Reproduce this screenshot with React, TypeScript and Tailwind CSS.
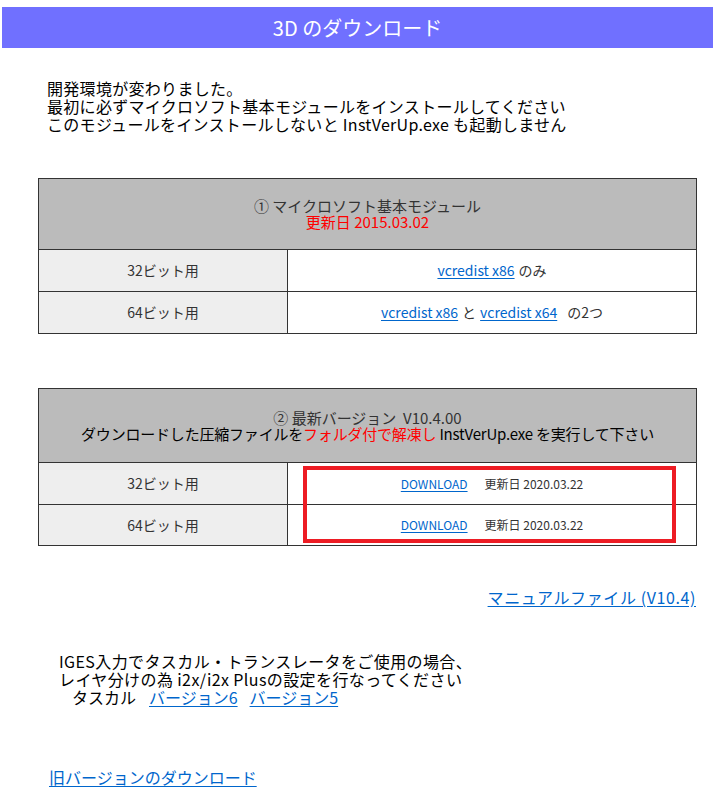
import React from "react";

const font = { fontFamily: '"Noto Sans CJK JP", "Noto Sans", sans-serif' };

function A({ children, className = "" }: { children: React.ReactNode; className?: string }) {
  return <a href="#" className={"text-[#0066cc] underline underline-offset-2 " + className}>{children}</a>;
}

export default function App() {
  return (
    <div className="w-[727px] h-[800px] bg-white text-black overflow-hidden" style={font}>
      <div className="ml-[2px] mt-[7px] w-[711px] h-[41px] bg-[#7070ff] flex items-center justify-center text-white text-[20px]">
        3D のダウンロード
      </div>

      <div className="ml-[47px] mt-[31px] text-[16px] leading-[18px] tracking-[0.3px]">
        <div>開発環境が変わりました。</div>
        <div>最初に必ずマイクロソフト基本モジュールをインストールしてください</div>
        <div>このモジュールをインストールしないと InstVerUp.exe も起動しません</div>
      </div>

      <div className="ml-[38px] mt-[45px] w-[659px] border border-[#333] text-[#333]">
        <div className="h-[71px] bg-[#bbbbbb] border-b border-[#333] flex flex-col items-center justify-center text-[15px] leading-[16px]">
          <div>① マイクロソフト基本モジュール</div>
          <div className="text-[#ff0000]">更新日 2015.03.02</div>
        </div>
        <div className="grid grid-cols-[249px_1fr] h-[42px] border-b border-[#333] text-[14px]">
          <div className="bg-[#eeeeee] border-r border-[#333] flex items-center justify-center">32ビット用</div>
          <div className="flex items-center justify-center gap-[4px]">
            <A>vcredist x86</A>
            <span>のみ</span>
          </div>
        </div>
        <div className="grid grid-cols-[249px_1fr] h-[41px] text-[14px]">
          <div className="bg-[#eeeeee] border-r border-[#333] flex items-center justify-center">64ビット用</div>
          <div className="flex items-center justify-center gap-[4px]">
            <A>vcredist x86</A>
            <span>と</span>
            <A>vcredist x64</A>
            <span className="ml-[6px]">の2つ</span>
          </div>
        </div>
      </div>

      <div className="relative ml-[38px] mt-[54px] w-[659px] border border-[#333] text-[#333]">
        <div className="h-[74px] bg-[#bbbbbb] border-b border-[#333] flex flex-col items-center justify-center text-[15px] leading-[16px]">
          <div>② 最新バージョン&nbsp; V10.4.00</div>
          <div className="text-black tracking-[-0.2px]">
            ダウンロードした圧縮ファイルを<span className="text-[#ff0000]">フォルダ付で解凍し</span> InstVerUp.exe を実行して下さい
          </div>
        </div>
        <div className="grid grid-cols-[249px_1fr] h-[42px] border-b border-[#333] text-[14px]">
          <div className="bg-[#eeeeee] border-r border-[#333] flex items-center justify-center">32ビット用</div>
          <div className="flex items-center justify-center gap-[17px] text-[12px]">
            <A>DOWNLOAD</A>
            <span>更新日 2020.03.22</span>
          </div>
        </div>
        <div className="grid grid-cols-[249px_1fr] h-[40px] text-[14px]">
          <div className="bg-[#eeeeee] border-r border-[#333] flex items-center justify-center">64ビット用</div>
          <div className="flex items-center justify-center gap-[17px] text-[12px]">
            <A>DOWNLOAD</A>
            <span>更新日 2020.03.22</span>
          </div>
        </div>
        <div className="absolute left-[264px] top-[77px] w-[373px] h-[77px] border-4 border-[#ed1c24]"></div>
      </div>

      <div className="mt-[41px] w-[696px] flex justify-end text-[16px] leading-[20px] tracking-[0.6px]">
        <A>マニュアルファイル (V10.4)</A>
      </div>

      <div className="ml-[59px] mt-[45px] text-[16px] leading-[18px] tracking-[0.4px]">
        <div>IGES入力でタスカル・トランスレータをご使用の場合、</div>
        <div>レイヤ分けの為 i2x/i2x Plusの設定を行なってください</div>
        <div className="flex tracking-[0px]">
          <span className="ml-[13px]">タスカル</span>
          <A className="ml-[13px]">バージョン6</A>
          <A className="ml-[12px]">バージョン5</A>
        </div>
      </div>

      <div className="ml-[49px] mt-[61px] text-[16px] leading-[20px]">
        <A>旧バージョンのダウンロード</A>
      </div>
    </div>
  );
}
